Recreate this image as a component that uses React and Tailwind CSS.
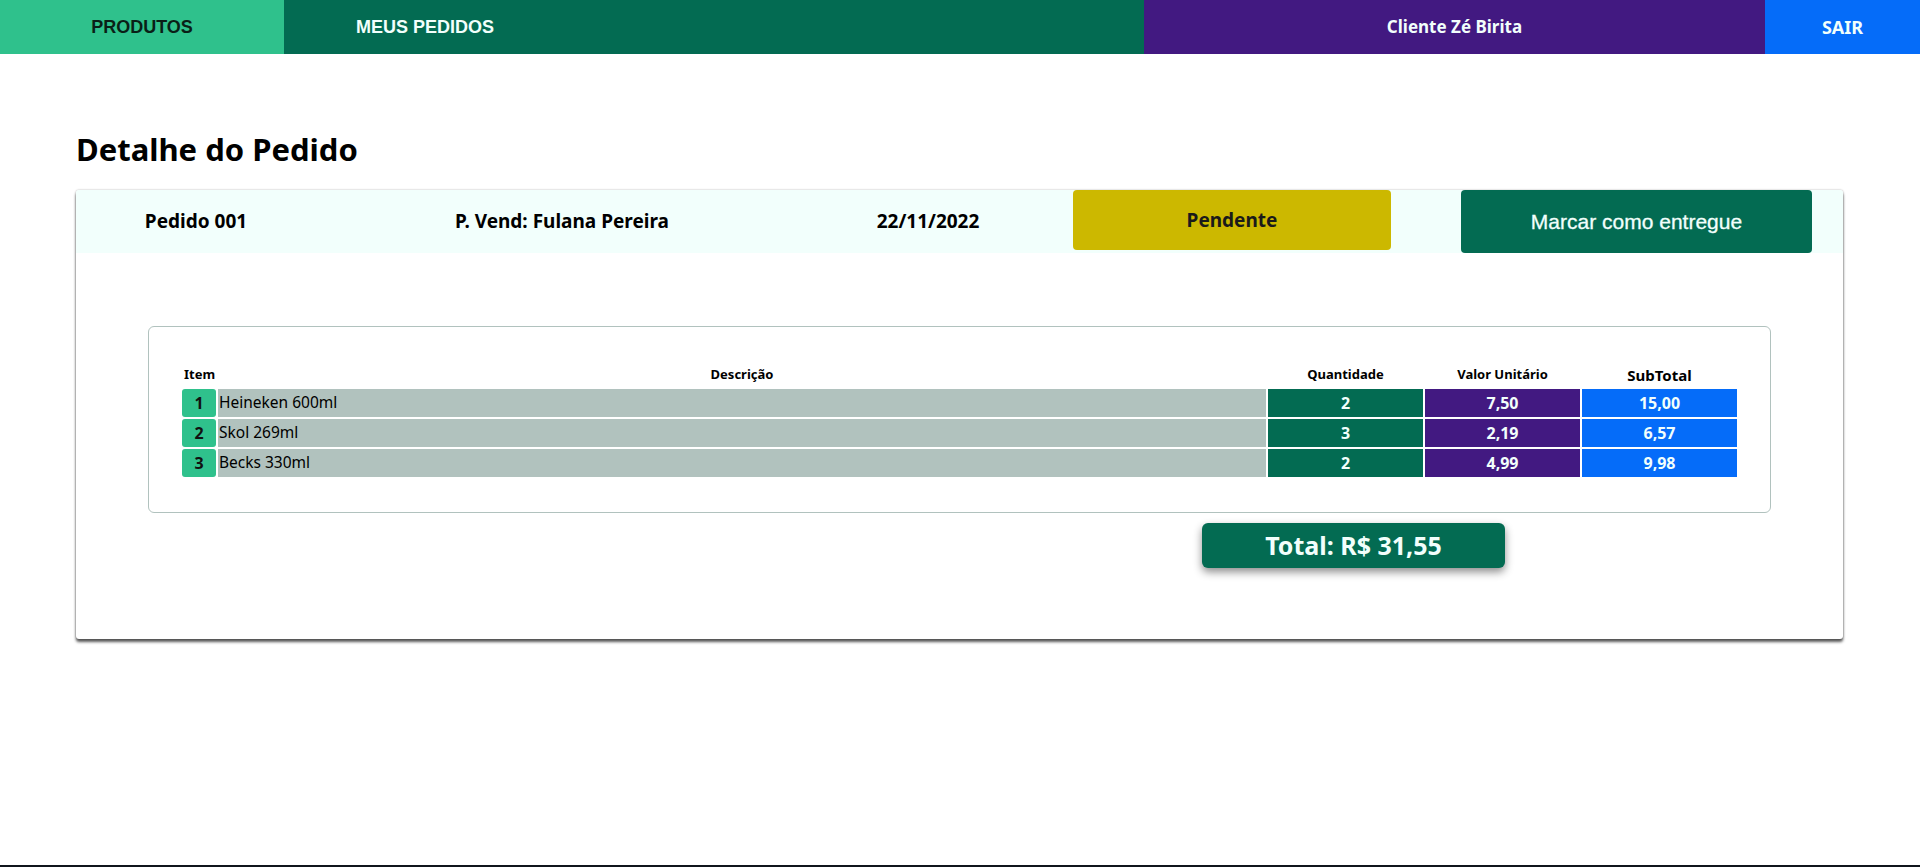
import React from "react";

const items = [
  { id: 1, desc: "Heineken 600ml", qty: "2", unit: "7,50", sub: "15,00" },
  { id: 2, desc: "Skol 269ml", qty: "3", unit: "2,19", sub: "6,57" },
  { id: 3, desc: "Becks 330ml", qty: "2", unit: "4,99", sub: "9,98" },
];

const ub = { fontFamily: '"Noto Sans", "Open Sans", sans-serif' };

export default function App() {
  return (
    <div className="min-h-[867px] flex flex-col bg-white" style={ub}>
      <nav className="flex h-[54px] w-full">
        <div className="w-[284px] bg-[#2FC18C] flex items-center justify-center text-[18px] font-bold text-[#0a1f17] [font-family:'Liberation_Sans',Arial,sans-serif]">
          PRODUTOS
        </div>
        <div className="flex-1 bg-[#036B52] flex items-center">
          <div className="w-[282px] flex items-center justify-center text-[18px] font-bold text-[#F2FFFC] [font-family:'Liberation_Sans',Arial,sans-serif]">
            MEUS PEDIDOS
          </div>
        </div>
        <div className="w-[621px] bg-[#421981] flex items-center justify-center text-[17px] font-bold text-[#F2FFFC]">
          Cliente Zé Birita
        </div>
        <div className="w-[155px] bg-[#056CF9] flex items-center justify-center text-[18px] font-bold text-[#F2FFFC]">
          SAIR
        </div>
      </nav>

      <main className="flex-1 px-[76px] pr-[77px]">
        <h1 className="mt-[77px] mb-[23px] text-[31px] leading-[36px] font-bold text-black">
          Detalhe do Pedido
        </h1>

        <section className="bg-white rounded-[3px] shadow-[0_3px_3px_rgba(0,0,0,0.65),0_0_2px_rgba(0,0,0,0.35)] pb-[71px]">
          <div className="h-[63px] bg-[#F2FFFC] flex items-start rounded-t-[3px]">
            <div className="w-[240px] h-[63px] flex items-center justify-center text-[19px] font-bold text-black">
              Pedido 001
            </div>
            <div className="w-[492px] h-[63px] flex items-center justify-center text-[19px] font-bold text-black">
              P. Vend: Fulana Pereira
            </div>
            <div className="w-[240px] h-[63px] flex items-center justify-center text-[19px] font-bold text-black">
              22/11/2022
            </div>
            <div className="ml-[25px] w-[318px] h-[60px] rounded-[4px] bg-[#CCB800] flex items-center justify-center text-[19px] font-bold text-[#1a1a1a]">
              Pendente
            </div>
            <button className="ml-[70px] w-[351px] h-[63px] rounded-[4px] bg-[#036B52] flex items-center justify-center text-[21px] text-[#F2FFFC] [font-family:'Liberation_Sans',Arial,sans-serif] [-webkit-text-stroke:0.3px_#F2FFFC]">
              Marcar como entregue
            </button>
          </div>

          <div className="mx-[72px] mt-[73px] border border-[#B1C2BE] rounded-[6px] pt-[36px] pb-[35px] px-[33px]">
            <div className="grid grid-cols-[34px_1048px_155px_155px_155px] gap-[2px]">
              <div className="h-[24px] flex items-center text-[13px] font-bold text-black pl-[2px]">Item</div>
              <div className="h-[24px] flex items-center justify-center text-[13px] font-bold text-black">Descrição</div>
              <div className="h-[24px] flex items-center justify-center text-[13px] font-bold text-black">Quantidade</div>
              <div className="h-[24px] flex items-center justify-center text-[13px] font-bold text-black">Valor Unitário</div>
              <div className="h-[24px] flex items-center justify-center text-[15px] font-bold text-black">SubTotal</div>
              {items.map((it) => (
                <React.Fragment key={it.id}>
                  <div className="h-[28px] bg-[#2FC18C] rounded-[3px] flex items-center justify-center text-[16px] font-bold text-[#111]">
                    {it.id}
                  </div>
                  <div className="h-[28px] bg-[#B1C2BE] flex items-center pl-[1px] text-[15.5px] text-black">
                    {it.desc}
                  </div>
                  <div className="h-[28px] bg-[#036B52] flex items-center justify-center text-[16px] font-bold text-[#F2FFFC]">
                    {it.qty}
                  </div>
                  <div className="h-[28px] bg-[#421981] flex items-center justify-center text-[16px] font-bold text-[#F2FFFC]">
                    {it.unit}
                  </div>
                  <div className="h-[28px] bg-[#056CF9] flex items-center justify-center text-[16px] font-bold text-[#F2FFFC]">
                    {it.sub}
                  </div>
                </React.Fragment>
              ))}
            </div>
          </div>

          <div className="ml-[1126px] mt-[10px] w-[303px] h-[45px] rounded-[6px] bg-[#036B52] shadow-[0_4px_8px_rgba(0,0,0,0.45)] flex items-center justify-center text-[25px] font-bold text-[#F2FFFC]">
            Total: R$ 31,55
          </div>
        </section>
      </main>

      <div className="h-[2px] bg-[#10151c]" />
    </div>
  );
}
